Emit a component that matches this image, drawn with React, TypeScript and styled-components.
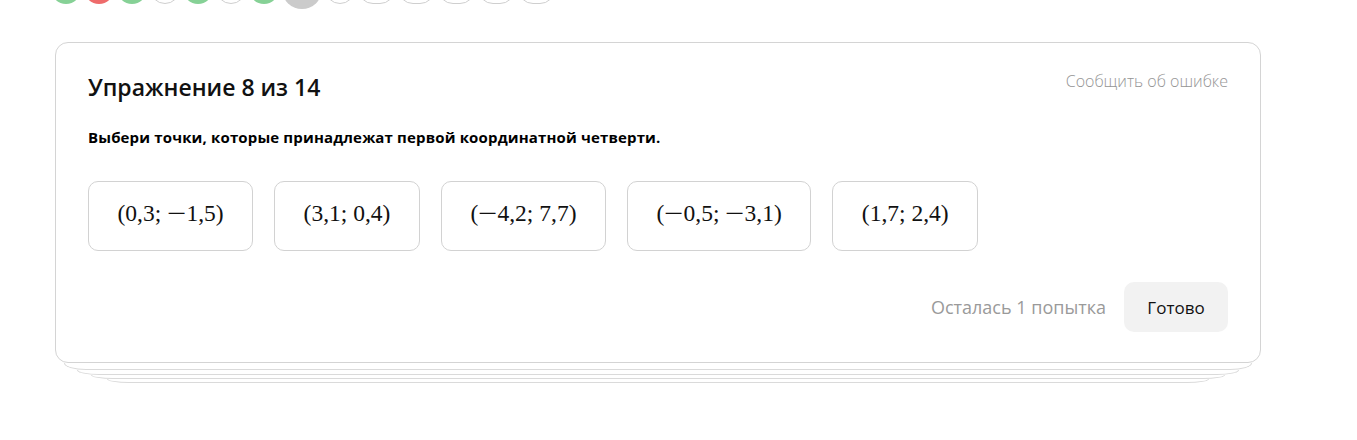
import React from 'react';
import styled, { createGlobalStyle } from 'styled-components';

const GlobalStyle = createGlobalStyle`
  body {
    margin: 0;
    background: #fff;
    font-family: 'Open Sans', 'Noto Sans', sans-serif;
    color: #000;
  }
`;

type StepState = 'done' | 'wrong' | 'empty' | 'current';

const steps: StepState[] = [
  'done', 'wrong', 'done', 'empty', 'done', 'empty', 'done', 'current',
  'empty', 'empty', 'empty', 'empty', 'empty', 'empty',
];

const options = [
  '(0,3; −1,5)',
  '(3,1; 0,4)',
  '(−4,2; 7,7)',
  '(−0,5; −3,1)',
  '(1,7; 2,4)',
];

const Page = styled.div`
  padding-left: 51px;
  width: 1210px;
`;

// the step bar is scrolled mostly out of view, only the bottoms of the dots show
const NavClip = styled.div`
  height: 9px;
  overflow: hidden;
  display: flex;
  align-items: flex-end;
`;

const NavRow = styled.div`
  display: flex;
  align-items: center;
  gap: 3px;
`;

const stepBg: Record<StepState, string> = {
  done: '#86d196',
  wrong: '#ee6b6b',
  empty: '#fff',
  current: '#cbcbcb',
};

const Step = styled.div<{ $state: StepState; $wide: boolean }>`
  box-sizing: border-box;
  height: ${({ $state }) => ($state === 'current' ? 40 : 30)}px;
  min-width: ${({ $state, $wide }) => ($state === 'current' ? 40 : $wide ? 37 : 30)}px;
  border-radius: 20px;
  background: ${({ $state }) => stepBg[$state]};
  border: 1px solid ${({ $state }) => ($state === 'empty' ? '#cfcfcf' : 'transparent')};
`;

const Stack = styled.div`
  margin: 33px 0 0 4px;
`;

const Card = styled.div`
  box-sizing: border-box;
  width: 1206px;
  height: 321px;
  border: 1px solid #d4d4d4;
  border-radius: 13px;
  background: #fff;
  padding: 28px 32px 30px 32px;
  display: flex;
  flex-direction: column;
`;

const Layer = styled.div<{ $inset: number; $h: number }>`
  box-sizing: border-box;
  margin: 0 ${({ $inset }) => $inset}px;
  height: ${({ $h }) => $h}px;
  border: 1px solid #dadada;
  border-top: 0;
  border-radius: 0 0 22px 22px / 0 0 ${({ $h }) => $h}px ${({ $h }) => $h}px;
`;

const Header = styled.div`
  display: flex;
  justify-content: space-between;
  align-items: flex-start;
`;

const Title = styled.h2`
  margin: 0;
  font-size: 23px;
  line-height: 32px;
  font-weight: 600;
  color: #111;
`;

const ReportLink = styled.a`
  margin-top: -1px;
  font-size: 16px;
  line-height: 22px;
  color: #949494;
  font-weight: 300;
  cursor: pointer;
`;

const Task = styled.p`
  margin: 23px 0 0;
  font-size: 15px;
  line-height: 22px;
  font-weight: 700;
  letter-spacing: 0.15px;
`;

const Options = styled.div`
  display: flex;
  gap: 21px;
  margin-top: 33px;
`;

const Option = styled.button`
  box-sizing: border-box;
  height: 70px;
  padding: 0 28.5px 5px;
  border: 1px solid #d2d2d2;
  border-radius: 10px;
  background: #fff;
  font-family: 'Liberation Serif', 'DejaVu Serif', serif;
  font-size: 23.5px;
  color: #111;
  white-space: pre;
  cursor: pointer;
`;

// math minus is longer than the text one
const Minus = styled.span`
  display: inline-block;
  margin: 0 3px;
  transform: scaleX(1.45);
`;

const Footer = styled.div`
  margin-top: auto;
  display: flex;
  justify-content: flex-end;
  align-items: center;
  gap: 18px;
`;

const Attempts = styled.span`
  font-size: 18px;
  color: #9a9a9a;
  font-weight: 400;
`;

const DoneButton = styled.button`
  box-sizing: border-box;
  width: 104px;
  height: 50px;
  border: 0;
  border-radius: 10px;
  background: #f2f2f2;
  font-family: 'Open Sans', 'Noto Sans', sans-serif;
  font-size: 17px;
  color: #111;
  cursor: pointer;
`;

const Formula: React.FC<{ text: string }> = ({ text }) => {
  const parts = text.split('−');
  return (
    <>
      {parts.map((p, i) => (
        <React.Fragment key={i}>
          {i > 0 && <Minus>−</Minus>}
          {p}
        </React.Fragment>
      ))}
    </>
  );
};

export default function App() {
  return (
    <Page>
      <GlobalStyle />
      <NavClip>
        <NavRow>
          {steps.map((s, i) => (
            <Step key={i} $state={s} $wide={i >= 9} aria-label={`Упражнение ${i + 1}`} />
          ))}
        </NavRow>
      </NavClip>
      <Stack>
        <Card>
          <Header>
            <Title>Упражнение 8 из 14</Title>
            <ReportLink>Сообщить об ошибке</ReportLink>
          </Header>
          <Task>Выбери точки, которые принадлежат первой координатной четверти.</Task>
          <Options>
            {options.map((o) => (
              <Option key={o}>
                <Formula text={o} />
              </Option>
            ))}
          </Options>
          <Footer>
            <Attempts>Осталась 1 попытка</Attempts>
            <DoneButton>Готово</DoneButton>
          </Footer>
        </Card>
        <Layer $inset={9} $h={7} />
        <Layer $inset={22} $h={5} />
        <Layer $inset={36} $h={4} />
        <Layer $inset={52} $h={4} />
      </Stack>
    </Page>
  );
}
